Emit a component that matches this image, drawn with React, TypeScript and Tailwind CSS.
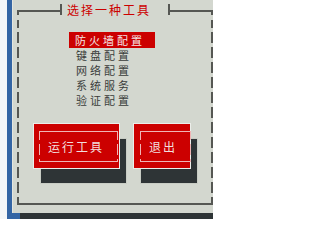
import React from 'react';

const menuItems = ['防火墙配置', '键盘配置', '网络配置', '系统服务', '验证配置'];

const font = "font-['Noto_Sans_CJK_SC','Noto_Sans',sans-serif]";

function DashedLine({ className }: { className: string }) {
  return <div className={className} />;
}

function Button({ label, width, innerWidth, innerLeft }: { label: string; width: string; innerWidth: string; innerLeft: string }) {
  return (
    <div className="relative">
      <div className="absolute left-[7px] top-[15px] w-full h-full bg-[#2e3436] border border-[#c8ccc4]" />
      <div className={`relative ${width} h-[46px] bg-[#cc0000] border border-[#eceeea] pt-[7px] ${innerLeft}`}>
        <div className={`${innerWidth} h-[31px] flex border-y border-[#f0b4b4]`}>
          <DashedLine className="w-[1px] h-full bg-[repeating-linear-gradient(to_bottom,#f0b4b4_0_8px,transparent_8px_12px,#f0b4b4_12px_15px)]" />
          <div className={`flex-1 flex items-center pl-[8px] text-[12px] tracking-[2px] text-[#f2dede] ${font}`}>{label}</div>
          <DashedLine className="w-[1px] h-full bg-[repeating-linear-gradient(to_bottom,#f0b4b4_0_8px,transparent_8px_12px,#f0b4b4_12px_15px)]" />
        </div>
      </div>
    </div>
  );
}

export default function App() {
  return (
    <div className="w-[213px] h-[219px] overflow-hidden flex flex-col bg-[#3465a4]">
      <div className="flex h-[213px]">
        <div className="w-[7px] bg-[#f4f6f8]" />
        <div className="w-[5px] bg-[#3465a4]" />
        {/* window */}
        <div className="w-[201px] h-full bg-[#d3d7cf] border-l border-[#e4e6e0] flex flex-col">
          {/* title row */}
          <div className="flex h-[20px] ml-[4px]">
            <div className="mt-[10px] w-[43px] h-[5px] border-l-2 border-t-2 border-[#555753]" />
            <div className="mt-[4px] w-[2px] h-[11px] bg-[#555753]" />
            <div className={`w-[106px] pl-[5px] leading-[19px] text-[12px] tracking-[2px] text-[#cc0000] ${font}`}>选择一种工具</div>
            <div className="mt-[4px] w-[2px] h-[11px] bg-[#555753]" />
            <div className="flex-1 mt-[10px] h-[5px] border-r-2 border-t-2 border-[#555753]" />
          </div>
          {/* frame body */}
          <div className="ml-[4px] h-[185px] flex border-b-2 border-[#555753]">
            <DashedLine className="w-[2px] h-full bg-[repeating-linear-gradient(to_bottom,#555753_0_8px,transparent_8px_12px,#555753_12px_15px)]" />
            <div className="flex-1 flex flex-col">
              <div className={`ml-[50px] mt-[12px] flex flex-col text-[11px] tracking-[3px] ${font}`}>
                {menuItems.map((item, i) =>
                  i === 0 ? (
                    <div key={item} className="w-[86px] h-[16px] leading-[16px] pl-[6px] bg-[#cc0000] text-[#f4e4e4]">
                      {item}
                    </div>
                  ) : (
                    <div key={item} className="h-[15px] leading-[15px] pl-[7px] text-[#3a3d3b]">
                      {item}
                    </div>
                  )
                )}
              </div>
              <div className="mt-[15px] ml-[14px] flex gap-[13px]">
                <Button label="运行工具" width="w-[87px]" innerWidth="w-[79px]" innerLeft="pl-[5px]" />
                <Button label="退出" width="w-[58px]" innerWidth="w-[51px]" innerLeft="pl-[6px]" />
              </div>
            </div>
            <DashedLine className="w-[2px] h-full bg-[repeating-linear-gradient(to_bottom,#555753_0_8px,transparent_8px_12px,#555753_12px_15px)]" />
          </div>
        </div>
      </div>
      <div className="flex h-[6px]">
        <div className="w-[7px] bg-[#f4f6f8]" />
        <div className="w-[13px] bg-[#3465a4]" />
        <div className="flex-1 bg-[#2e3436]" />
      </div>
    </div>
  );
}
